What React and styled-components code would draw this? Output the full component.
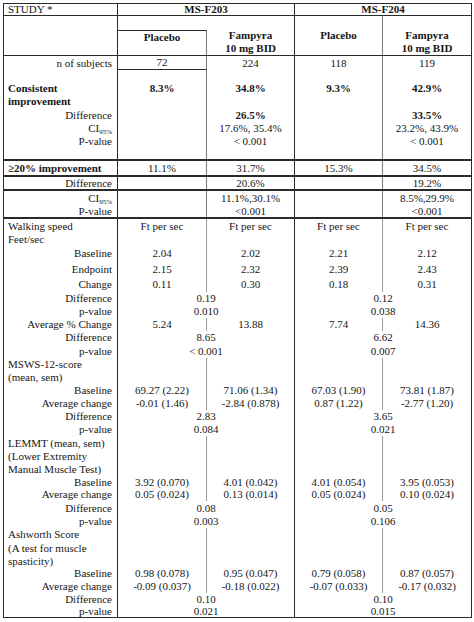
import React from 'react';
import styled, { createGlobalStyle } from 'styled-components';

const DARK = '#2a2a2a';
const SOFT = '#7a7a7a';
const PALE = '#9a9a9a';

const GlobalStyle = createGlobalStyle`
  html, body {
    margin: 0;
    padding: 0;
    background: #fff;
  }
  body {
    font-family: "Liberation Serif", "Times New Roman", serif;
    font-size: 11px;
    color: #161616;
  }
  * { box-sizing: border-box; }
`;

const Table = styled.div`
  margin: 3px;
  width: 469px;
  border: 1px solid ${DARK};
`;

const Row = styled.div`
  display: grid;
  grid-template-columns: 114px 89px 88px 88px 88px;
  grid-template-rows: ${p => p.$h}px;
  height: ${p => p.$h + (p.$rule || 0)}px;
  border-bottom: ${p => (p.$rule ? `${p.$rule}px solid ${DARK}` : 'none')};
`;

const Cell = styled.div`
  grid-column: span ${p => p.$span || 1};
  display: flex;
  flex-direction: column;
  justify-content: ${p => (p.$pt != null ? 'flex-start' : 'center')};
  padding: ${p => p.$pt || 0}px 5px 0 ${p => (p.$align === 'left' ? 4 : 5)}px;
  text-align: ${p => p.$align || 'center'};
  font-weight: ${p => (p.$bold ? 700 : 400)};
  line-height: 13px;
  white-space: nowrap;
  border-right: ${p => (p.$line ? `1px solid ${p.$line}` : 'none')};
  border-bottom: ${p => (p.$under ? `1px solid ${DARK}` : 'none')};
`;

const Txt = styled.div`
  display: block;
`;

const SlotCell = styled(Cell)`
  padding: 14px 0 0 0;
`;

const PlaceboBox = styled.div`
  flex: 1;
  border-top: 1px solid ${DARK};
  border-right: 1px solid ${SOFT};
  font-weight: 700;
  text-align: center;
`;

const Sub = styled.span`
  font-size: 7px;
  vertical-align: -2px;
  line-height: 0;
`;

const CI = () => <>CI<Sub>95%</Sub></>;

function SplitRow({ h, rule, label, left, bold, vals = [], boldVals, soft = SOFT, pt, underFirst }) {
  return (
    <Row $h={h} $rule={rule}>
      <Cell $align={left ? 'left' : 'right'} $bold={bold} $line={DARK} $pt={pt}><Txt>{label}</Txt></Cell>
      <Cell $line={soft} $bold={boldVals} $pt={pt} $under={underFirst}><Txt>{vals[0]}</Txt></Cell>
      <Cell $line={DARK} $bold={boldVals} $pt={pt}><Txt>{vals[1]}</Txt></Cell>
      <Cell $line={soft} $bold={boldVals} $pt={pt}><Txt>{vals[2]}</Txt></Cell>
      <Cell $bold={boldVals} $pt={pt}><Txt>{vals[3]}</Txt></Cell>
    </Row>
  );
}

function SpanRow({ h, label, vals }) {
  return (
    <Row $h={h}>
      <Cell $align="right" $line={DARK}><Txt>{label}</Txt></Cell>
      <Cell $span={2} $line={DARK}><Txt>{vals[0]}</Txt></Cell>
      <Cell $span={2}><Txt>{vals[1]}</Txt></Cell>
    </Row>
  );
}

const ft = ['Ft per sec', 'Ft per sec', 'Ft per sec', 'Ft per sec'];

// walking speed and the other measures; s = values per column, d = value across both arms
const measures = [
  { h: 14, label: 'Walking speed', left: true, s: ft },
  { h: 13, label: 'Feet/sec', left: true, s: [] },
  { h: 15, label: 'Baseline', s: ['2.04', '2.02', '2.21', '2.12'] },
  { h: 16, label: 'Endpoint', s: ['2.15', '2.32', '2.39', '2.43'] },
  { h: 15, label: 'Change', s: ['0.11', '0.30', '0.18', '0.31'] },
  { h: 13, label: 'Difference', d: ['0.19', '0.12'] },
  { h: 13, label: 'p-value', d: ['0.010', '0.038'] },
  { h: 13, label: 'Average % Change', s: ['5.24', '13.88', '7.74', '14.36'] },
  { h: 13, label: 'Difference', d: ['8.65', '6.62'] },
  { h: 14, label: 'p-value', d: ['< 0.001', '0.007'] },
  { h: 13, label: 'MSWS-12-score', left: true, s: [] },
  { h: 13, label: '(mean, sem)', left: true, s: [] },
  { h: 13, label: 'Baseline', s: ['69.27 (2.22)', '71.06 (1.34)', '67.03 (1.90)', '73.81 (1.87)'] },
  { h: 13, label: 'Average change', s: ['-0.01 (1.46)', '-2.84 (0.878)', '0.87 (1.22)', '-2.77 (1.20)'] },
  { h: 13, label: 'Difference', d: ['2.83', '3.65'] },
  { h: 13, label: 'p-value', d: ['0.084', '0.021'] },
  { h: 14, label: 'LEMMT (mean, sem)', left: true, s: [] },
  { h: 13, label: '(Lower Extremity', left: true, s: [] },
  { h: 13, label: 'Manual Muscle Test)', left: true, s: [] },
  { h: 12, label: 'Baseline', s: ['3.92 (0.070)', '4.01 (0.042)', '4.01 (0.054)', '3.95 (0.053)'] },
  { h: 13, label: 'Average change', s: ['0.05 (0.024)', '0.13 (0.014)', '0.05 (0.024)', '0.10 (0.024)'] },
  { h: 14, label: 'Difference', d: ['0.08', '0.05'] },
  { h: 13, label: 'p-value', d: ['0.003', '0.106'] },
  { h: 13, label: 'Ashworth Score', left: true, s: [] },
  { h: 14, label: '(A test for muscle', left: true, s: [] },
  { h: 12, label: 'spasticity)', left: true, s: [] },
  { h: 13, label: 'Baseline', s: ['0.98 (0.078)', '0.95 (0.047)', '0.79 (0.058)', '0.87 (0.057)'] },
  { h: 13, label: 'Average change', s: ['-0.09 (0.037)', '-0.18 (0.022)', '-0.07 (0.033)', '-0.17 (0.032)'] },
  { h: 13, label: 'Difference', d: ['0.10', '0.10'] },
  { h: 11, label: 'p-value', d: ['0.021', '0.015'] },
];

export default function App() {
  return (
    <>
      <GlobalStyle />
      <Table>
        {/* header */}
        <Row $h={11} $rule={1}>
          <Cell $align="left" $line={DARK}><Txt>STUDY *</Txt></Cell>
          <Cell $span={2} $bold $line={DARK}><Txt>MS-F203</Txt></Cell>
          <Cell $span={2} $bold><Txt>MS-F204</Txt></Cell>
        </Row>
        <Row $h={39} $rule={1}>
          <Cell $line={DARK} />
          <SlotCell>
            <PlaceboBox>Placebo</PlaceboBox>
          </SlotCell>
          <Cell $pt={13} $bold $line={DARK}><Txt>Fampyra<br />10 mg BID</Txt></Cell>
          <Cell $pt={13} $bold $line={SOFT}><Txt>Placebo</Txt></Cell>
          <Cell $pt={13} $bold><Txt>Fampyra<br />10 mg BID</Txt></Cell>
        </Row>

        {/* consistent improvement */}
        <SplitRow h={14} label="n of subjects" vals={['72', '224', '118', '119']} underFirst />
        <SplitRow
          h={39}
          pt={12}
          left
          bold
          boldVals
          label={<>Consistent<br />improvement</>}
          vals={['8.3%', '34.8%', '9.3%', '42.9%']}
        />
        <SplitRow h={13} label="Difference" boldVals vals={['', '26.5%', '', '33.5%']} />
        <SplitRow h={13} label={<CI />} vals={['', '17.6%, 35.4%', '', '23.2%, 43.9%']} />
        <SplitRow h={13} label="P-value" vals={['', '< 0.001', '', '< 0.001']} />
        <SplitRow h={11} rule={2} label="" />

        {/* >= 20% improvement */}
        <SplitRow h={14} rule={2} left bold label="≥20% improvement" vals={['11.1%', '31.7%', '15.3%', '34.5%']} />
        <SplitRow h={12} rule={2} label="Difference" vals={['', '20.6%', '', '19.2%']} />
        <SplitRow
          h={26}
          rule={2}
          pt={1}
          label={<><CI /><br />P-value</>}
          vals={['', <>11.1%,30.1%<br />&lt;0.001</>, '', <>8.5%,29.9%<br />&lt;0.001</>]}
        />

        {/* secondary measures */}
        {measures.map((m, i) =>
          m.d ? (
            <SpanRow key={i} h={m.h} label={m.label} vals={m.d} />
          ) : (
            <SplitRow key={i} h={m.h} label={m.label} left={m.left} vals={m.s} soft={PALE} />
          )
        )}
      </Table>
    </>
  );
}
